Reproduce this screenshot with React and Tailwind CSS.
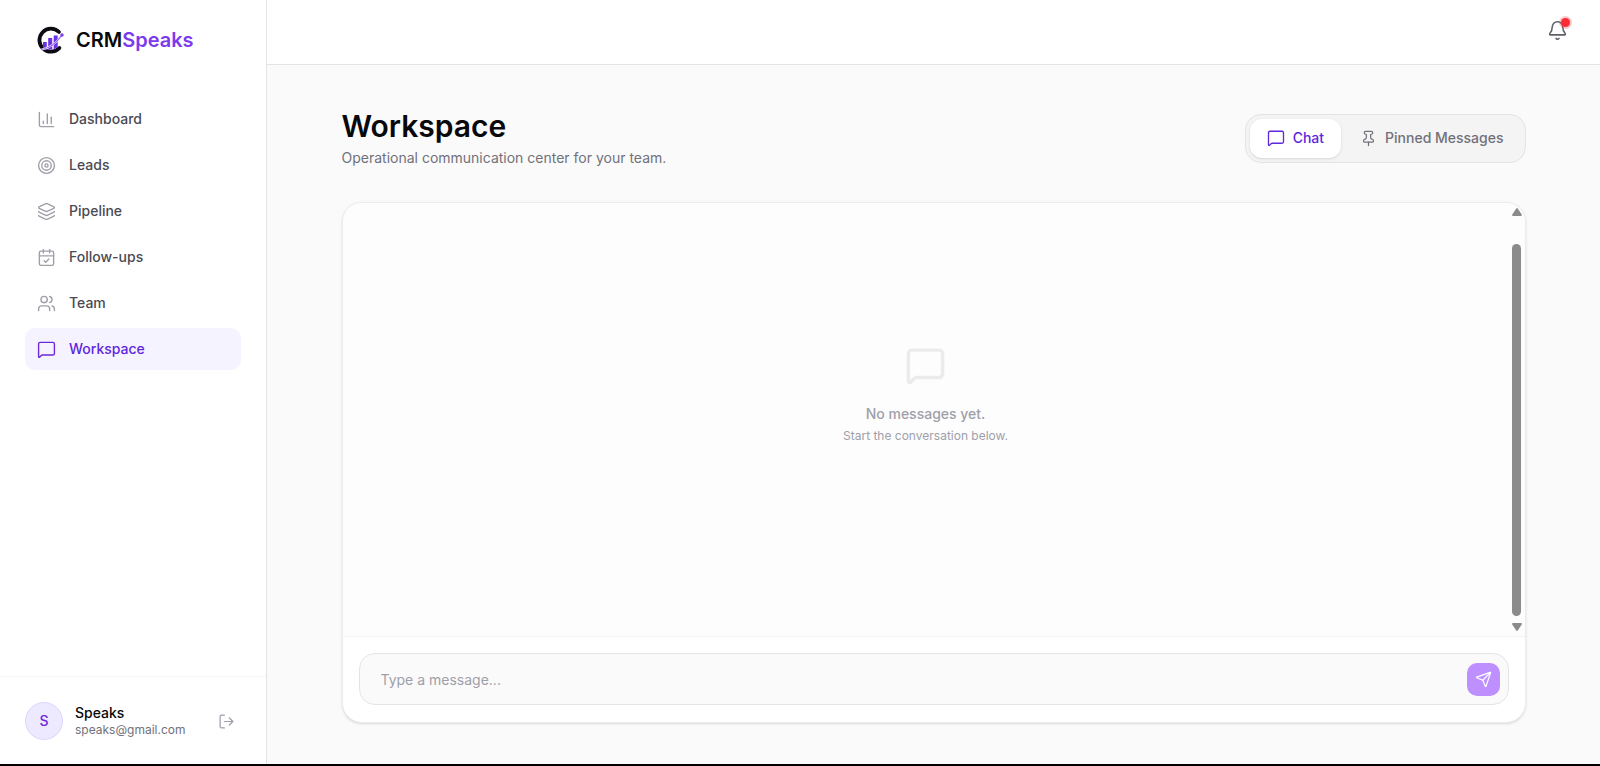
import {
  Bell,
  CalendarCheck,
  ChartColumn,
  Layers,
  LogOut,
  MessageSquare,
  Pin,
  Send,
  Target,
  Users,
} from "lucide-react";

const navItems = [
  { label: "Dashboard", icon: ChartColumn },
  { label: "Leads", icon: Target },
  { label: "Pipeline", icon: Layers },
  { label: "Follow-ups", icon: CalendarCheck },
  { label: "Team", icon: Users },
  { label: "Workspace", icon: MessageSquare, active: true },
];

function Logo() {
  return (
    <svg viewBox="0 0 28 28" className="size-7 shrink-0" aria-hidden="true">
      <path d="M23 6A11.500 11.500 0 1 0 23.400 22" fill="none" stroke="#0b0b12" strokeWidth="3.800" strokeLinecap="round" />
      <path d="M7 16h3.800v7.500H7z M12.200 12h4v11.500h-4z M17.700 9.500h4v11.500l-4 2.500z" fill="#6a32e6" />
      <path d="M5.500 23.500C13 22.500 20.500 17 26 9" fill="none" stroke="#fff" strokeWidth="2" />
      <path d="M5.500 23.500C13 22.500 20.500 17 26 9" fill="none" stroke="#8b5cf6" strokeWidth="1.200" />
      <circle cx="26" cy="9" r="1.700" fill="#7c3aed" />
    </svg>
  );
}

function Sidebar() {
  return (
    <aside className="flex w-[267px] shrink-0 flex-col border-r border-[#e4e4e7] bg-white">
      <a href="#home" className="flex h-20 items-center gap-3 px-9 text-xl font-semibold">
        <Logo />
        <span>
          CRM<span className="text-[#7c3aed]">Speaks</span>
        </span>
      </a>
      <nav className="flex flex-1 flex-col gap-1 px-[25px] pt-[18px]" aria-label="Main">
        {navItems.map(({ label, icon: Icon, active }) => (
          <a
            key={label}
            href={`#${label.toLowerCase()}`}
            aria-current={active ? "page" : undefined}
            className={
              active
                ? "flex h-[42px] items-center gap-[13px] rounded-[10px] bg-[#f5f3ff] px-3 text-sm font-medium text-[#5f27dc]"
                : "flex h-[42px] items-center gap-[13px] rounded-[10px] px-3 text-sm font-medium text-[#4a4a53]"
            }
          >
            <Icon size={19} strokeWidth={1.75} className={active ? "text-[#6d28d9]" : "text-[#9f9fa9]"} />
            {label}
          </a>
        ))}
      </nav>
      <div className="flex items-center gap-3 border-t border-[#f4f4f5] px-[25px] pt-[25px] pb-6">
        <div className="flex size-[38px] shrink-0 items-center justify-center rounded-full border border-[#ddd6fe] bg-[#ede9fe] text-sm font-medium text-[#6d28d9]">
          S
        </div>
        <div className="min-w-0 flex-1">
          <p className="text-sm leading-[18px] font-medium text-[#09090b]">Speaks</p>
          <p className="truncate text-xs leading-4 text-[#71717b]">speaks@gmail.com</p>
        </div>
        <button type="button" aria-label="Log out" className="p-1.5 text-[#9f9fa9]">
          <LogOut size={17} strokeWidth={1.75} />
        </button>
      </div>
    </aside>
  );
}

function Scrollbar() {
  return (
    <div className="flex w-4 shrink-0 flex-col items-center py-[5px] text-[#8b8b8b]" aria-hidden="true">
      <svg viewBox="0 0 10 8" className="h-2 w-2.5">
        <path d="M5 1 9 7H1z" fill="currentColor" stroke="currentColor" strokeWidth="1.800" strokeLinejoin="round" />
      </svg>
      <div className="mt-7 mb-[7px] w-[9px] flex-1 rounded-full bg-[#8b8b8b]" />
      <svg viewBox="0 0 10 8" className="h-2 w-2.5">
        <path d="M5 7 1 1h8z" fill="currentColor" stroke="currentColor" strokeWidth="1.800" strokeLinejoin="round" />
      </svg>
    </div>
  );
}

export default function App() {
  return (
    <div className="flex h-screen border-b-2 border-black bg-[#fafafa] font-['Inter','Liberation_Sans',sans-serif] text-[#09090b]">
      <Sidebar />
      <div className="flex min-w-0 flex-1 flex-col">
        <header className="flex h-[65px] shrink-0 items-start justify-end border-b border-[#e4e4e7] bg-white px-8 pt-5">
          <button type="button" aria-label="Notifications" className="relative text-[#5f5f69]">
            <Bell size={21} strokeWidth={1.75} />
            <span className="absolute -top-1 -right-1 size-[13px] rounded-full bg-[#fb2c36]/25 p-[2px]">
              <span className="block size-[9px] rounded-full bg-[#fb2c36]" />
            </span>
          </button>
        </header>
        <main className="mx-auto flex min-h-0 w-full max-w-[1184px] flex-1 flex-col gap-8 py-[41px]">
          <div className="flex items-center justify-between">
            <div>
              <h1 className="text-3xl leading-10 font-semibold">Workspace</h1>
              <p className="text-sm leading-6 text-[#71717b]">Operational communication center for your team.</p>
            </div>
            <div className="flex gap-0.5 rounded-2xl border border-[#e4e4e7] bg-[#f4f4f5] p-1 text-sm font-medium">
              <button
                type="button"
                aria-pressed="true"
                className="flex h-[39px] items-center gap-2 rounded-xl bg-white px-[17px] text-[#5f27dc] shadow-sm"
              >
                <MessageSquare size={18} strokeWidth={1.75} />
                Chat
              </button>
              <button type="button" aria-pressed="false" className="flex h-[39px] items-center gap-2 px-[17px] text-[#71717b]">
                <Pin size={17} strokeWidth={1.75} />
                Pinned Messages
              </button>
            </div>
          </div>
          <section className="flex min-h-0 flex-1 flex-col overflow-hidden rounded-[20px] border border-[#ececee] bg-white shadow-sm">
            <div className="flex min-h-0 flex-1 bg-[#fdfdfd]">
              <div className="flex flex-1 flex-col items-center pt-[142px]">
                <MessageSquare size={41} strokeWidth={2} className="text-[#ebebeb]" />
                <p className="mt-4 text-sm leading-6 font-medium text-[#9f9fa9]">No messages yet.</p>
                <p className="text-xs leading-5 text-[#9f9fa9]">Start the conversation below.</p>
              </div>
              <Scrollbar />
            </div>
            <form className="border-t border-[#f4f4f5] px-4 pt-4 pb-[17px]" onSubmit={(event) => event.preventDefault()}>
              <div className="flex h-[52px] items-center rounded-2xl border border-[#e4e4e7] bg-[#fafafa] pr-2 pl-[21px]">
                <input
                  type="text"
                  aria-label="Message"
                  placeholder="Type a message..."
                  className="h-full min-w-0 flex-1 bg-transparent text-sm outline-none placeholder:text-[#9f9fa9]"
                />
                <button
                  type="submit"
                  aria-label="Send message"
                  className="flex size-[33px] items-center justify-center rounded-[10px] bg-[#be8fff] text-white"
                >
                  <Send size={17} strokeWidth={1.75} />
                </button>
              </div>
            </form>
          </section>
        </main>
      </div>
    </div>
  );
}
